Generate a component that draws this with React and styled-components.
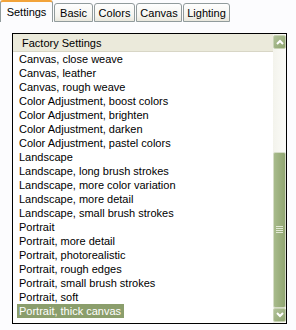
import React from "react";
import styled, { createGlobalStyle } from "styled-components";

const Global = createGlobalStyle`
  html, body { margin: 0; padding: 0; background: #fcfcfe; }
  body { font-family: Tahoma, "Liberation Sans", Arial, sans-serif; font-size: 11px; color: #000; }
`;

const Page = styled.div`
  width: 296px;
  height: 330px;
  background: #fcfcfe;
  display: flex;
  flex-direction: column;
  overflow: hidden;
`;

const TabStrip = styled.div`
  display: flex;
  align-items: flex-end;
  height: 22px;
`;

const Tab = styled.div`
  box-sizing: border-box;
  width: ${(p) => p.$w}px;
  height: ${(p) => (p.$active ? "22px" : "19px")};
  display: flex;
  align-items: center;
  justify-content: center;
  padding-top: ${(p) => (p.$active ? "0" : "1px")};
  border: 1px solid #919b9c;
  border-top: ${(p) => (p.$active ? "2px solid #f2a33a" : "1px solid #919b9c")};
  border-bottom: ${(p) => (p.$active ? "none" : "1px solid #919b9c")};
  border-radius: 3px 3px 0 0;
  background: ${(p) =>
    p.$active ? "#fcfcfe" : "linear-gradient(#fefefe, #f5f4ef 70%, #e9e7dd)"};
  font-size: 11px;
  margin-right: 1px;
`;

const Body = styled.div`
  flex: 1;
  padding: 11px 9px 6px 12px;
  display: flex;
`;

const ListBox = styled.div`
  box-sizing: border-box;
  width: 275px;
  height: 291px;
  border: 1px solid #000;
  background: #fff;
  display: flex;
`;

const ListMain = styled.div`
  flex: 1;
  display: flex;
  flex-direction: column;
  min-width: 0;
`;

const Header = styled.div`
  height: 17px;
  background: #ebeadb;
  border-bottom: 1px solid #d8d6c6;
  display: flex;
  align-items: center;
  padding-left: 9px;
  font-size: 11px;
`;

const Items = styled.div`
  display: flex;
  flex-direction: column;
  padding-left: 4px;
`;

const Item = styled.div`
  height: 14px;
  line-height: 14px;
  font-size: 11px;
  padding: 0 3px 0 2px;
  align-self: flex-start;
  white-space: nowrap;
  background: ${(p) => (p.$sel ? "#8b9e6c" : "transparent")};
  color: ${(p) => (p.$sel ? "#fff" : "#000")};
`;

const ScrollBar = styled.div`
  width: 13px;
  background: linear-gradient(90deg, #f3f3ec, #fbfbf8);
  display: flex;
  flex-direction: column;
  padding: 1px 0;
  box-sizing: border-box;
`;

const Arrow = styled.div`
  box-sizing: border-box;
  width: 13px;
  height: 14px;
  border: 1px solid #c9d3b6;
  border-radius: 2px;
  background: linear-gradient(135deg, #b1c29a, #8fa56f);
  display: flex;
  align-items: center;
  justify-content: center;
`;

const Track = styled.div`
  flex: 1;
  display: flex;
  flex-direction: column;
  justify-content: flex-end;
`;

const Thumb = styled.div`
  box-sizing: border-box;
  height: 156px;
  border: 1px solid #d6ddc8;
  border-radius: 2px;
  background: linear-gradient(90deg, #a8bb8c, #9cb07e 50%, #90a571);
  display: flex;
  align-items: center;
  justify-content: center;
`;

const Grip = () => (
  <svg width="7" height="8" viewBox="0 0 7 8">
    {[1, 3, 5, 7].map((y) => (
      <line key={y} x1="0" y1={y - 0.5} x2="7" y2={y - 0.5} stroke="#e3ead6" strokeWidth="1" />
    ))}
  </svg>
);

const Chevron = ({ up }) => (
  <svg width="8" height="6" viewBox="0 0 8 6">
    <polyline
      points={up ? "1,5 4,2 7,5" : "1,1 4,4 7,1"}
      fill="none"
      stroke="#fff"
      strokeWidth="2"
    />
  </svg>
);

const items = [
  "Canvas, close weave",
  "Canvas, leather",
  "Canvas, rough weave",
  "Color Adjustment, boost colors",
  "Color Adjustment, brighten",
  "Color Adjustment, darken",
  "Color Adjustment, pastel colors",
  "Landscape",
  "Landscape, long brush strokes",
  "Landscape, more color variation",
  "Landscape, more detail",
  "Landscape, small brush strokes",
  "Portrait",
  "Portrait, more detail",
  "Portrait, photorealistic",
  "Portrait, rough edges",
  "Portrait, small brush strokes",
  "Portrait, soft",
  "Portrait, thick canvas",
];

const tabs = [
  { t: "Settings", w: 53 },
  { t: "Basic", w: 39 },
  { t: "Colors", w: 41 },
  { t: "Canvas", w: 46 },
  { t: "Lighting", w: 47 },
];

export default function App() {
  return (
    <>
      <Global />
      <Page>
        <TabStrip>
          {tabs.map((x, i) => (
            <Tab key={x.t} $active={i === 0} $w={x.w}>
              {x.t}
            </Tab>
          ))}
        </TabStrip>
        <Body>
          <ListBox>
            <ListMain>
              <Header>Factory Settings</Header>
              <Items>
                {items.map((it, i) => (
                  <Item key={it} $sel={i === items.length - 1}>
                    {it}
                  </Item>
                ))}
              </Items>
            </ListMain>
            <ScrollBar>
              <Arrow>
                <Chevron up />
              </Arrow>
              <Track>
                <Thumb>
                  <Grip />
                </Thumb>
              </Track>
              <Arrow>
                <Chevron />
              </Arrow>
            </ScrollBar>
          </ListBox>
        </Body>
      </Page>
    </>
  );
}
